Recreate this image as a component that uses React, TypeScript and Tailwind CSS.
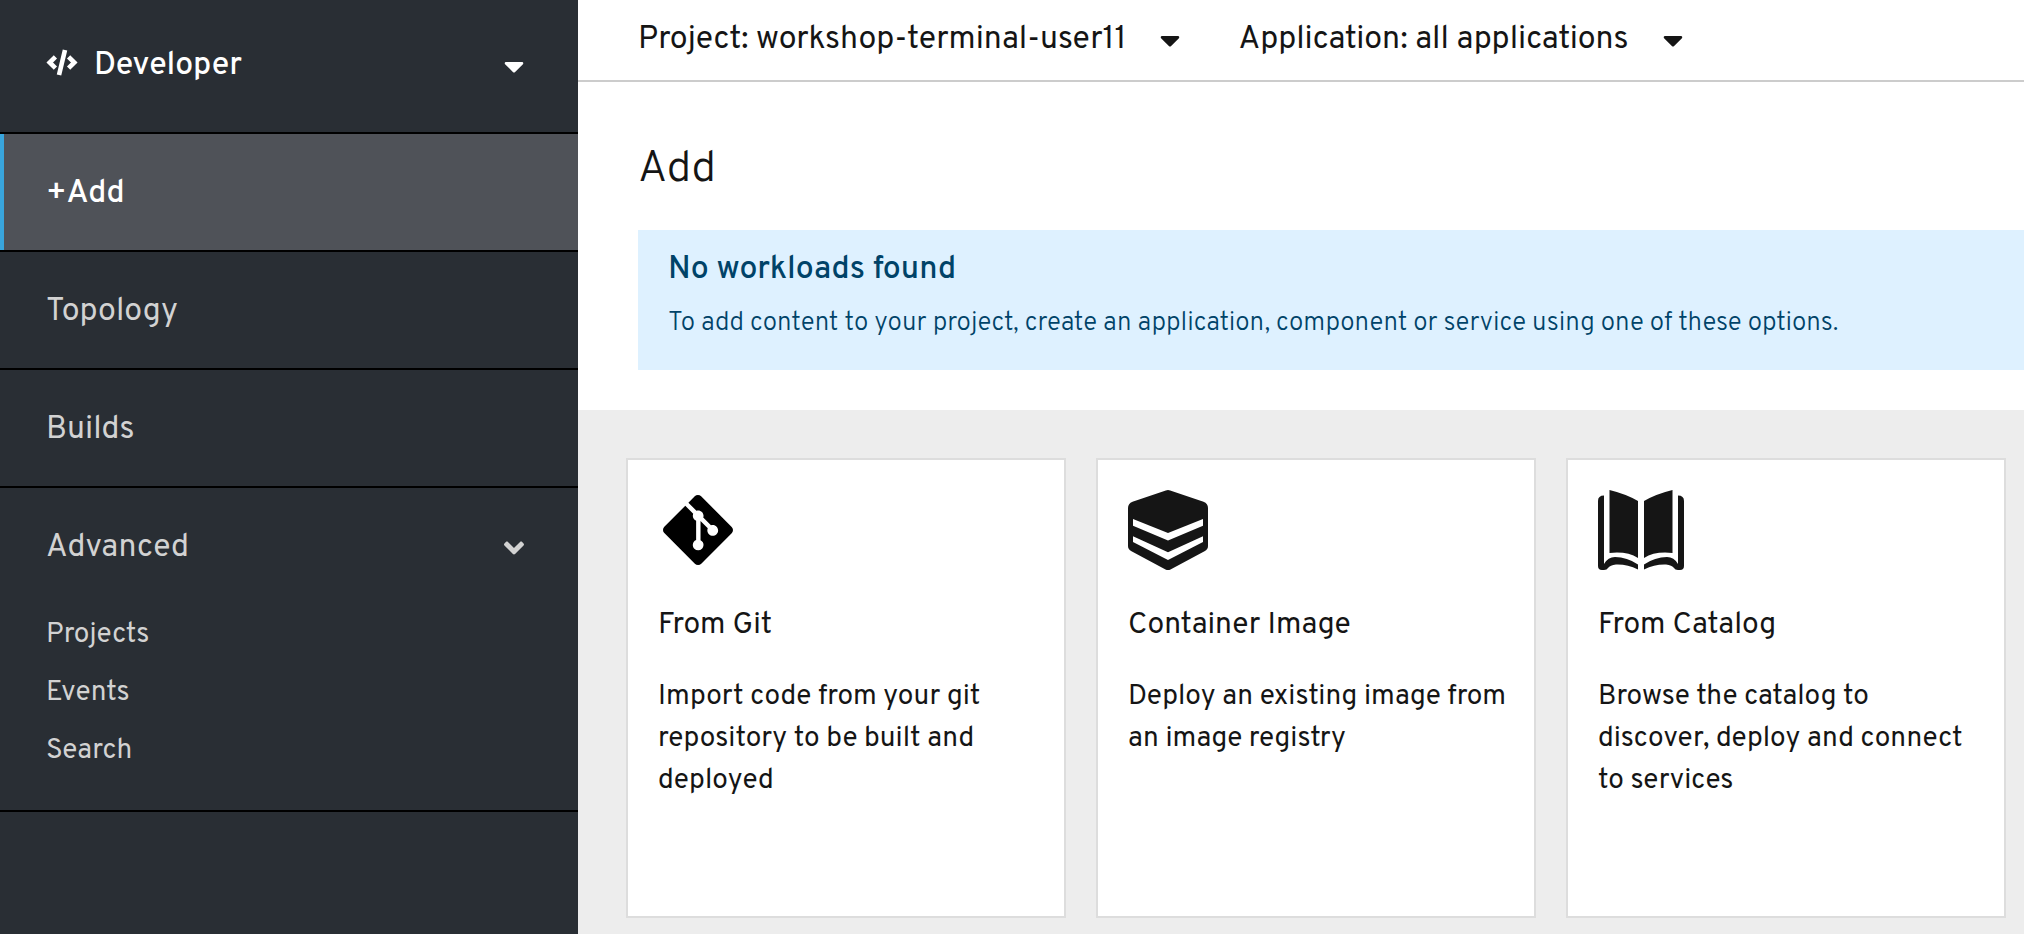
import { FaAngleDown, FaCaretDown, FaGitAlt } from "react-icons/fa";
import type { ReactNode } from "react";

function CodeIcon() {
  return (
    <svg viewBox="0 0 32 27" className="mb-2 h-[27px] w-8" fill="none" stroke="currentColor" strokeWidth="4.600" aria-hidden="true">
      <path d="M9.400 7.800 3.700 13.500l5.700 5.700M22.600 7.800l5.700 5.700-5.700 5.700M19 1 13 26" />
    </svg>
  );
}

function LayersIcon() {
  return (
    <svg viewBox="0 0 80 80" className="size-20" fill="#151515" aria-hidden="true">
      <path
        fillRule="evenodd"
        d="M37.8.4Q40-.4 42.2.4L75.5 11.8Q80 13.5 80 18V56Q80 59.500 76.500 61.300L42.500 79.400Q40 80.600 37.500 79.400L3.500 61.300Q0 59.500 0 56V18Q0 13.500 4.500 11.800ZM5 29V35.700L40 50.500 75 35.700V29L40 43ZM5 46.300V52L40 70 75 52V46.300L40 62.300Z"
      />
    </svg>
  );
}

function BookIcon() {
  return (
    <svg viewBox="0 0 86 80" className="h-20 w-[86px]" fill="#151515" aria-hidden="true">
      <path d="M11.500 0Q28 4 40 11V68Q29 61 11.500 63ZM74.500 0Q58 4 46 11V68Q57 61 74.500 63Z" />
      <path d="M0 11Q0 5.500 6 5.500V74Q10 67 17 67Q29 67 40 74.500V79.500Q29 74 18 74.500Q12 75 10 78Q9 80 6 80H4Q0 80 0 76ZM86 11Q86 5.500 80 5.500V74Q76 67 69 67Q57 67 46 74.500V79.500Q57 74 68 74.500Q74 75 76 78Q77 80 80 80H82Q86 80 86 76Z" />
    </svg>
  );
}

const cards: { title: string; text: string; icon: ReactNode }[] = [
  {
    title: "From Git",
    text: "Import code from your git repository to be built and deployed",
    icon: <FaGitAlt className="size-20 text-black" aria-hidden="true" />,
  },
  { title: "Container Image", text: "Deploy an existing image from an image registry", icon: <LayersIcon /> },
  { title: "From Catalog", text: "Browse the catalog to discover, deploy and connect to services", icon: <BookIcon /> },
];

const row = "flex h-[118px] w-full items-center border-b-2 border-black";

export default function App() {
  return (
    <div className="flex min-h-screen bg-[#ededed] font-['Overpass','Roboto',sans-serif] text-[#151515]">
      <nav aria-label="Main" className="w-[578px] shrink-0 bg-[#292e34] text-[32px] leading-[48px] text-[#d2d2d2]">
        <button type="button" className="flex h-[134px] w-full items-center border-b-2 border-black pr-[48px] pl-[46px] font-medium text-white">
          <CodeIcon />
          <span className="ml-4">Developer</span>
          <FaCaretDown className="ml-auto" aria-hidden="true" />
        </button>
        <a href="#add" aria-current="page" className={`${row} bg-[#4f5258] font-medium text-white`}>
          <span className="flex h-full items-center border-l-4 border-[#39a5dc] pt-1 pl-[42px]">+Add</span>
        </a>
        <a href="#topology" className={`${row} pt-1 pl-[46px]`}>Topology</a>
        <a href="#builds" className={`${row} pt-1 pl-[46px]`}>Builds</a>
        <section className="border-b-2 border-black pb-[30px]">
          <button type="button" aria-expanded="true" className="flex h-[116px] w-full items-center justify-between pt-1 pr-[48px] pl-[46px]">
            Advanced
            <FaAngleDown aria-hidden="true" />
          </button>
          <ul className="pt-[2px] text-[28px] leading-[58px]">
            {["Projects", "Events", "Search"].map((name) => (
              <li key={name}>
                <a href={`#${name.toLowerCase()}`} className="block pl-[46px]">{name}</a>
              </li>
            ))}
          </ul>
        </section>
      </nav>

      <main className="min-w-0 grow">
        <div className="bg-white pb-10">
          <div className="flex h-[82px] items-center gap-13 border-b-2 border-[#ccc] pl-[60px] text-[32px] leading-[48px]">
            <button type="button" className="flex items-center gap-7 whitespace-nowrap">
              Project: workshop-terminal-user11
              <FaCaretDown aria-hidden="true" />
            </button>
            <button type="button" className="flex items-center gap-7 whitespace-nowrap">
              Application: all applications
              <FaCaretDown aria-hidden="true" />
            </button>
          </div>
          <h1 className="mt-[58px] ml-[60px] text-[44px] leading-[60px] font-light">Add</h1>
          <section className="mt-[30px] ml-[60px] h-[140px] bg-[#def1ff] px-[30px] pt-4 text-[#004368]">
            <h2 className="text-[32px] leading-[48px] font-medium">No workloads found</h2>
            <p className="mt-[10px] text-[26px] leading-10 font-light">
              To add content to your project, create an application, component or service using one of these options.
            </p>
          </section>
        </div>
        <div className="grid grid-cols-3 gap-[30px] py-12 pr-[18px] pl-12 pb-4">
          {cards.map((card) => (
            <a key={card.title} href="#add" className="block min-h-[460px] border-2 border-[#ddd] bg-white py-[30px] pr-5 pl-[30px]">
              {card.icon}
              <h3 className="mt-[34px] text-[30px] leading-[44px]">{card.title}</h3>
              <p className="mt-7 text-[28px] leading-[42px]">{card.text}</p>
            </a>
          ))}
        </div>
      </main>
    </div>
  );
}
